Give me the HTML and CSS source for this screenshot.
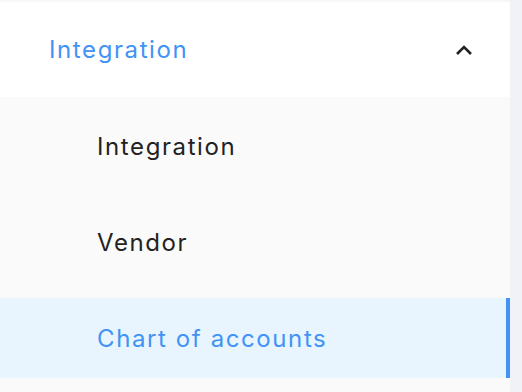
FILE: index.html
```html
<!DOCTYPE html>
<html>
<head>
  <link rel="stylesheet" href="styles.css">
</head>
<body>
  <div class="sidebar">
    <div class="menu-head">
      <span class="menu-title">Integration</span>
      <svg class="chevron" width="18" height="12" viewBox="0 0 18 12">
        <path d="M2 10 L9 3 L16 10" fill="none" stroke="#222" stroke-width="2.6"/>
      </svg>
    </div>
    <div class="submenu">
      <div class="submenu-item">Integration</div>
      <div class="submenu-item">Vendor</div>
      <div class="submenu-item active">Chart of accounts</div>
    </div>
  </div>
</body>
</html>
```

FILE: styles.css
```css
body {
  margin: 0;
  background-color: #f0f2f7;
  font-family: 'Inter', sans-serif;
}
.sidebar {
  width: 510px;
  height: 392px;
  padding-top: 2px;
  box-sizing: border-box;
  background-color: #f7f7f8;
}
.menu-head {
  height: 95px;
  display: flex;
  align-items: center;
  justify-content: space-between;
  padding: 0 37px 0 49px;
  background: #ffffff;
}
.menu-title {
  color: #4193f5;
  font-size: 24px;
  letter-spacing: 1.6px;
}
.chevron {
  display: block;
}
.submenu {
  background: #fafafa;
  padding-top: 9px;
  height: 295px;
  box-sizing: border-box;
  display: flex;
  flex-direction: column;
  gap: 16px;
}
.submenu-item {
  height: 80px;
  display: flex;
  align-items: center;
  padding-left: 97px;
  font-size: 24px;
  letter-spacing: 1.6px;
  color: #222222;
}
.submenu-item.active {
  background: #e8f5fe;
  color: #4193f5;
  border-right: 4px solid #4193f5;
}
```
